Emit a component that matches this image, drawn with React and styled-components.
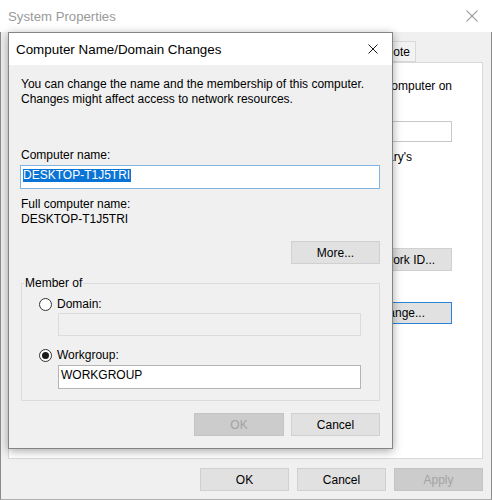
import React from 'react'
import styled, { createGlobalStyle } from 'styled-components'

const GlobalStyle = createGlobalStyle`
  html, body {
    margin: 0;
    padding: 0;
    background: #ffffff;
  }
  body {
    font-family: "Liberation Sans", Arial, sans-serif;
    font-size: 12px;
    color: #000;
  }
  * {
    box-sizing: border-box;
  }
`

const CloseGlyph = ({ size = 10, color = '#000' }) => (
  <svg width={size} height={size} viewBox="0 0 10 10">
    <path d="M0.5 0.5 L9.5 9.5 M9.5 0.5 L0.5 9.5" stroke={color} strokeWidth="1" fill="none" />
  </svg>
)

const App = () => {
  return (
    <>
      <GlobalStyle />
      <Window>
        <TitleBar>
          <WindowTitle>System Properties</WindowTitle>
          <CloseGlyph size={12} color="#9a9a9a" />
        </TitleBar>
        <WindowBody>
          {/* tab labels left of "Remote" sit under the dialog */}
          <Tabs>
            <Tab $active $w={113} />
            <Tab $w={64} />
            <Tab $w={65} />
            <Tab $w={109} />
            <Tab>Remote</Tab>
          </Tabs>
          {/* the Computer Name page, mostly covered by the dialog */}
          <Panel>
            <PanelLine $end>Windows uses the following information to identify your computer on</PanelLine>
            <BgField $mt={27} />
            <PanelLine $end $trail={40} $mt={8}>For example: "Kitchen Computer" or "Mary's</PanelLine>
            <PanelButton $w={103} $mt={83}>Network ID...</PanelButton>
            <PanelButton $w={106} $h={22} $mt={31} $focus>Change...</PanelButton>
          </Panel>
          <Footer>
            <Button>OK</Button>
            <Button>Cancel</Button>
            <Button disabled>Apply</Button>
          </Footer>
        </WindowBody>

        <Dialog>
          <DialogTitle>
            <DialogCaption>Computer Name/Domain Changes</DialogCaption>
            <CloseGlyph size={10} color="#1a1a1a" />
          </DialogTitle>
          <DialogBody>
            <Text>
              You can change the name and the membership of this computer.
              <br />
              Changes might affect access to network resources.
            </Text>
            <Text $mt={41}>Computer name:</Text>
            <TextBox $focus $mt={2}>
              <Selected>DESKTOP-T1J5TRI</Selected>
            </TextBox>
            <Text $mt={8}>Full computer name:</Text>
            <Text>DESKTOP-T1J5TRI</Text>
            <ButtonRow $mt={14}>
              <Button>More...</Button>
            </ButtonRow>
            <Group>
              <Legend>Member of</Legend>
              <RadioRow>
                <Radio />
                Domain:
              </RadioRow>
              <TextBox $disabled $w={303} $ml={19} $mt={1} $h={23} />
              <RadioRow $mt={12}>
                <Radio $checked />
                Workgroup:
              </RadioRow>
              <TextBox $w={303} $ml={19} $mt={2}>WORKGROUP</TextBox>
            </Group>
            <ButtonRow $mt={12}>
              <Button disabled $w={90}>OK</Button>
              <Button>Cancel</Button>
            </ButtonRow>
          </DialogBody>
        </Dialog>
      </Window>
    </>
  )
}

export default App

const Window = styled.div`
  position: relative;
  width: 492px;
  height: 500px;
  display: flex;
  flex-direction: column;
  background: #f0f0f0;
  overflow: hidden;
`

const TitleBar = styled.div`
  flex: none;
  height: 32px;
  display: flex;
  align-items: center;
  justify-content: space-between;
  padding: 0 14px 0 8px;
  background: #ffffff;
`

const WindowTitle = styled.div`
  font-size: 13.2px;
  color: #9a9a9a;
`

const WindowBody = styled.div`
  flex: 1;
  display: flex;
  flex-direction: column;
  padding: 0 8px 0 7px;
  border-left: 1px solid #8c8c8c;
  border-right: 1px solid #8c8c8c;
  border-bottom: 1px solid #b0b0b0;
`

const Tabs = styled.div`
  flex: none;
  height: 30px;
  display: flex;
  align-items: flex-end;
  padding-left: 2px;
`

const Tab = styled.div`
  flex: none;
  width: ${p => (p.$w ? `${p.$w}px` : 'auto')};
  height: ${p => (p.$active ? '23px' : '21px')};
  margin-bottom: ${p => (p.$active ? '-1px' : '0')};
  display: flex;
  align-items: center;
  padding: 1px 5px 0 6px;
  white-space: nowrap;
  background: ${p => (p.$active ? '#ffffff' : '#f3f3f3')};
  border: 1px solid #d9d9d9;
  border-bottom: ${p => (p.$active ? 'none' : '1px solid #d9d9d9')};
  position: relative;
  z-index: ${p => (p.$active ? 1 : 0)};
`

const Panel = styled.div`
  flex: none;
  height: 397px;
  display: flex;
  flex-direction: column;
  align-items: flex-end;
  padding: 16px 30px 0 14px;
  background: #ffffff;
  border: 1px solid #d9d9d9;
`

const PanelLine = styled.div`
  line-height: 15px;
  white-space: nowrap;
  margin-top: ${p => p.$mt || 0}px;
  padding-right: ${p => p.$trail || 0}px;
`

const BgField = styled.div`
  width: 320px;
  height: 21px;
  margin-top: ${p => p.$mt || 0}px;
  background: #ffffff;
  border: 1px solid #c8c8c8;
`

const Button = styled.button`
  flex: none;
  width: ${p => p.$w || 89}px;
  height: ${p => p.$h || 23}px;
  padding: 0;
  font-family: "Liberation Sans", Arial, sans-serif;
  font-size: 12px;
  color: #000;
  background: #e1e1e1;
  border: 1px solid ${p => (p.$focus ? '#2b84d6' : '#d0d0d0')};
  border-radius: 0;

  &:disabled {
    color: #a3a3a3;
    background: #cccccc;
    border-color: #c4c4c4;
  }
`

const PanelButton = styled(Button)`
  margin-top: ${p => p.$mt || 0}px;
`

const Footer = styled.div`
  display: flex;
  justify-content: flex-end;
  gap: 8px;
  padding-top: 9px;
`

const Dialog = styled.div`
  position: absolute;
  left: 8px;
  top: 32px;
  width: 385px;
  display: flex;
  flex-direction: column;
  background: #f0f0f0;
  border: 1px solid #858585;
  box-shadow: 0 2px 9px rgba(0, 0, 0, 0.35);
  z-index: 2;
`

const DialogTitle = styled.div`
  height: 32px;
  display: flex;
  align-items: center;
  justify-content: space-between;
  padding: 0 14px 0 7px;
  background: #ffffff;
`

const DialogCaption = styled.div`
  font-size: 13.4px;
`

const DialogBody = styled.div`
  display: flex;
  flex-direction: column;
  padding: 12px 12px 12px 11px;
`

const Text = styled.div`
  line-height: 15px;
  padding-left: 1px;
  margin-top: ${p => p.$mt || 0}px;
`

const TextBox = styled.div`
  width: ${p => (p.$w ? `${p.$w}px` : 'auto')};
  height: ${p => p.$h || 24}px;
  margin-top: ${p => p.$mt || 0}px;
  margin-left: ${p => p.$ml || 0}px;
  padding: 2px 2px 0 2px;
  line-height: 14px;
  background: ${p => (p.$disabled ? '#f0f0f0' : '#ffffff')};
  border: 1px solid ${p => (p.$focus ? '#83b3e0' : p.$disabled ? '#dcdcdc' : '#b4b4b4')};
`

const Selected = styled.span`
  display: inline-block;
  margin-top: 1px;
  padding-right: 1px;
  line-height: 13px;
  color: #ffffff;
  background: #0a74d6;
`

const ButtonRow = styled.div`
  display: flex;
  justify-content: flex-end;
  gap: 7px;
  margin-top: ${p => p.$mt || 0}px;
`

const Group = styled.fieldset`
  margin: 12px 0 0 1px;
  padding: 6px 18px 11px 17px;
  min-width: 0;
  display: flex;
  flex-direction: column;
  border: 1px solid #dcdcdc;
`

const Legend = styled.legend`
  margin-left: -15px;
  padding: 0 1px;
  line-height: 15px;
`

const RadioRow = styled.div`
  display: flex;
  align-items: center;
  gap: 5px;
  line-height: 15px;
  margin-top: ${p => p.$mt || 0}px;
`

const Radio = styled.span`
  position: relative;
  flex: none;
  width: 13px;
  height: 13px;
  border-radius: 50%;
  border: 1px solid #333333;
  background: #ffffff;

  &::after {
    content: '';
    position: absolute;
    inset: 2px;
    border-radius: 50%;
    background: ${p => (p.$checked ? '#1a1a1a' : 'transparent')};
  }
`
